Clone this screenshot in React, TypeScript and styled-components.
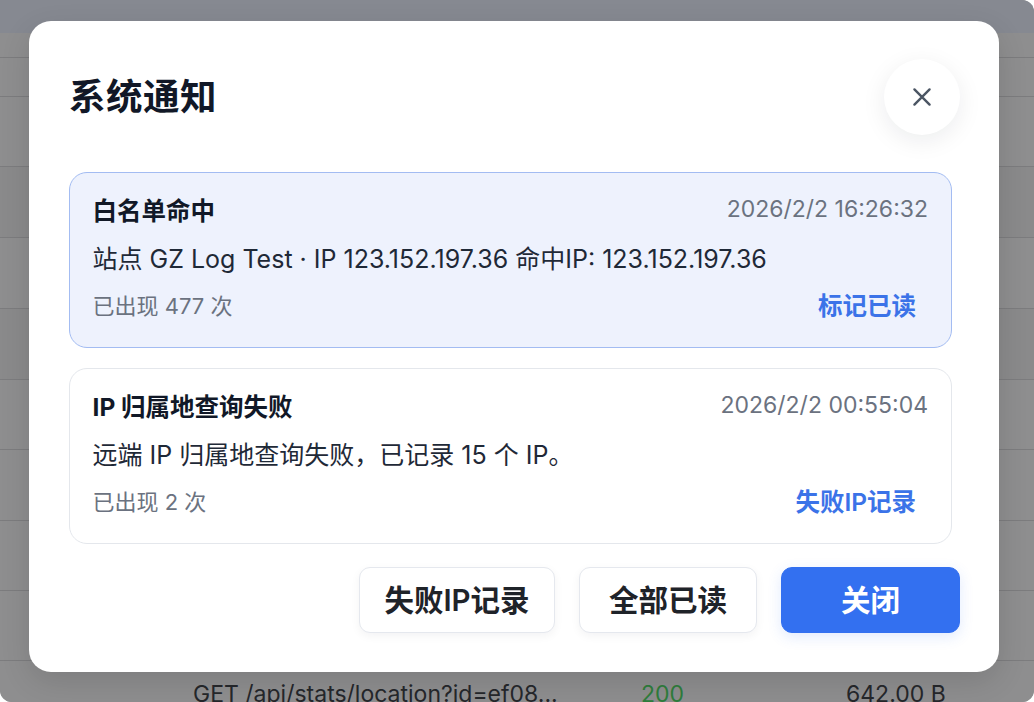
import React from "react";
import styled, { createGlobalStyle } from "styled-components";

const Global = createGlobalStyle`
  html, body { margin: 0; padding: 0; background: #ffffff; }
  body { font-family: "Inter", "Noto Sans CJK SC", sans-serif; }
  * { box-sizing: border-box; }
`;

const Screen = styled.div`
  position: relative;
  width: 1034px;
  height: 702px;
  overflow: hidden;
  border-radius: 0 12px 12px 12px;
  background: #8e8e8e;
  display: flex;
  flex-direction: column;
`;

const TopBar = styled.div`
  height: 33px;
  flex: none;
  background: #868991;
`;

const Row = styled.div<{ $h: number; $shade?: boolean }>`
  height: ${(p) => p.$h}px;
  flex: none;
  border-bottom: 1px solid #7c7c7e;
  background: ${(p) => (p.$shade ? "#8a8a8b" : "#8e8e8f")};
  display: grid;
  grid-template-columns: 193px 448px 205px 1fr;
  align-items: center;
  font-size: 23px;
  color: #25272b;
`;

const Cell = styled.div<{ $green?: boolean }>`
  white-space: nowrap;
  margin-top: -4px;
  color: ${(p) => (p.$green ? "#2f7d3c" : "#25272b")};
`;

const Modal = styled.div`
  position: absolute;
  left: 29px;
  top: 21px;
  width: 970px;
  height: 651px;
  background: #ffffff;
  border-radius: 22px;
  box-shadow: 0 10px 30px rgba(0, 0, 0, 0.12);
  padding: 40px 39px 39px 40px;
  display: flex;
  flex-direction: column;
`;

const Header = styled.div`
  display: flex;
  align-items: center;
  justify-content: space-between;
  height: 74px;
  margin-top: -2px;
`;

const Title = styled.h2`
  margin: 0;
  margin-top: -4px;
  font-size: 36.5px;
  font-weight: 700;
  color: #111827;
  letter-spacing: 0.5px;
  font-family: "Noto Sans CJK SC", sans-serif;
`;

const CloseButton = styled.button`
  width: 76px;
  height: 76px;
  border-radius: 50%;
  border: none;
  background: #ffffff;
  box-shadow: 0 6px 24px rgba(17, 24, 39, 0.08);
  display: flex;
  align-items: center;
  justify-content: center;
  padding: 0;
  margin-top: 2px;
  color: #4b5563;
`;

const List = styled.div`
  margin-top: 39px;
  padding-right: 8px;
  display: flex;
  flex-direction: column;
  gap: 20px;
`;

const Card = styled.div<{ $unread?: boolean }>`
  height: 176px;
  border-radius: 18px;
  border: 1.5px solid ${(p) => (p.$unread ? "#a3bcf2" : "#e4e7ec")};
  background: ${(p) => (p.$unread ? "#eef2fd" : "#ffffff")};
  padding: 21px 23px 0 22.5px;
  display: flex;
  flex-direction: column;
`;

const CardTop = styled.div`
  display: flex;
  justify-content: space-between;
  align-items: center;
  height: 30px;
`;

const CardTitle = styled.div`
  font-size: 24.5px;
  font-weight: 700;
  color: #111827;
`;

const Time = styled.div`
  font-size: 23px;
  color: #6b7280;
`;

const Body = styled.div`
  margin-top: 19px;
  font-size: 25px;
  color: #1f2937;
  height: 32px;
  line-height: 32px;
  white-space: nowrap;
`;

const CardBottom = styled.div`
  margin-top: 13px;
  display: flex;
  justify-content: space-between;
  align-items: center;
  padding-right: 12px;
  height: 32px;
`;

const Meta = styled.div`
  font-size: 22px;
  color: #6b7280;
`;

const Link = styled.button`
  border: none;
  background: none;
  padding: 0;
  font-family: inherit;
  font-size: 24.5px;
  font-weight: 600;
  color: #3b73e8;
`;

const Footer = styled.div`
  margin-top: 23px;
  display: flex;
  justify-content: flex-end;
  gap: 24px;
`;

const Btn = styled.button<{ $primary?: boolean; $w: number }>`
  width: ${(p) => p.$w}px;
  height: 66px;
  border-radius: 11px;
  font-family: "Inter", "Noto Sans CJK SC", sans-serif;
  font-size: 29.5px;
  font-weight: 600;
  white-space: nowrap;
  padding: 0 0 5px 0;
  border: 1.5px solid ${(p) => (p.$primary ? "#3370f0" : "#e5e8ee")};
  background: ${(p) => (p.$primary ? "#3370f0" : "#ffffff")};
  color: ${(p) => (p.$primary ? "#ffffff" : "#1f2329")};
  box-shadow: ${(p) => (p.$primary ? "0 4px 14px rgba(51,112,240,0.15)" : "0 3px 10px rgba(17,24,39,0.05)")};
`;

const XIcon = () => (
  <svg width="26" height="26" viewBox="0 0 24 24" fill="none" stroke="currentColor" strokeWidth="2.2" strokeLinecap="round">
    <path d="M5 5l14 14M19 5L5 19" />
  </svg>
);

export default function App() {
  const rows = [
    { h: 25 },
    { h: 39 },
    { h: 70 },
    { h: 71, s: true },
    { h: 71 },
    { h: 71, s: true },
    { h: 70 },
    { h: 71 },
    { h: 70 },
    { h: 70 },
  ];
  return (
    <>
      <Global />
      <Screen>
        <TopBar />
        {rows.map((r, i) => (
          <Row key={i} $h={r.h} $shade={r.s} />
        ))}
        <Row $h={70}>
          <div />
          <Cell>GET /api/stats/location?id=ef08...</Cell>
          <Cell $green>200</Cell>
          <Cell>642.00 B</Cell>
        </Row>
        <Modal>
          <Header>
            <Title>系统通知</Title>
            <CloseButton aria-label="关闭">
              <XIcon />
            </CloseButton>
          </Header>
          <List>
            <Card $unread>
              <CardTop>
                <CardTitle>白名单命中</CardTitle>
                <Time>2026/2/2 16:26:32</Time>
              </CardTop>
              <Body>站点 GZ Log Test · IP 123.152.197.36 命中IP: 123.152.197.36</Body>
              <CardBottom>
                <Meta>已出现 477 次</Meta>
                <Link>标记已读</Link>
              </CardBottom>
            </Card>
            <Card>
              <CardTop>
                <CardTitle>IP 归属地查询失败</CardTitle>
                <Time>2026/2/2 00:55:04</Time>
              </CardTop>
              <Body>远端 IP 归属地查询失败，已记录 15 个 IP。</Body>
              <CardBottom>
                <Meta>已出现 2 次</Meta>
                <Link>失败IP记录</Link>
              </CardBottom>
            </Card>
          </List>
          <Footer>
            <Btn $w={196}>失败IP记录</Btn>
            <Btn $w={178}>全部已读</Btn>
            <Btn $w={179} $primary>
              关闭
            </Btn>
          </Footer>
        </Modal>
      </Screen>
    </>
  );
}
